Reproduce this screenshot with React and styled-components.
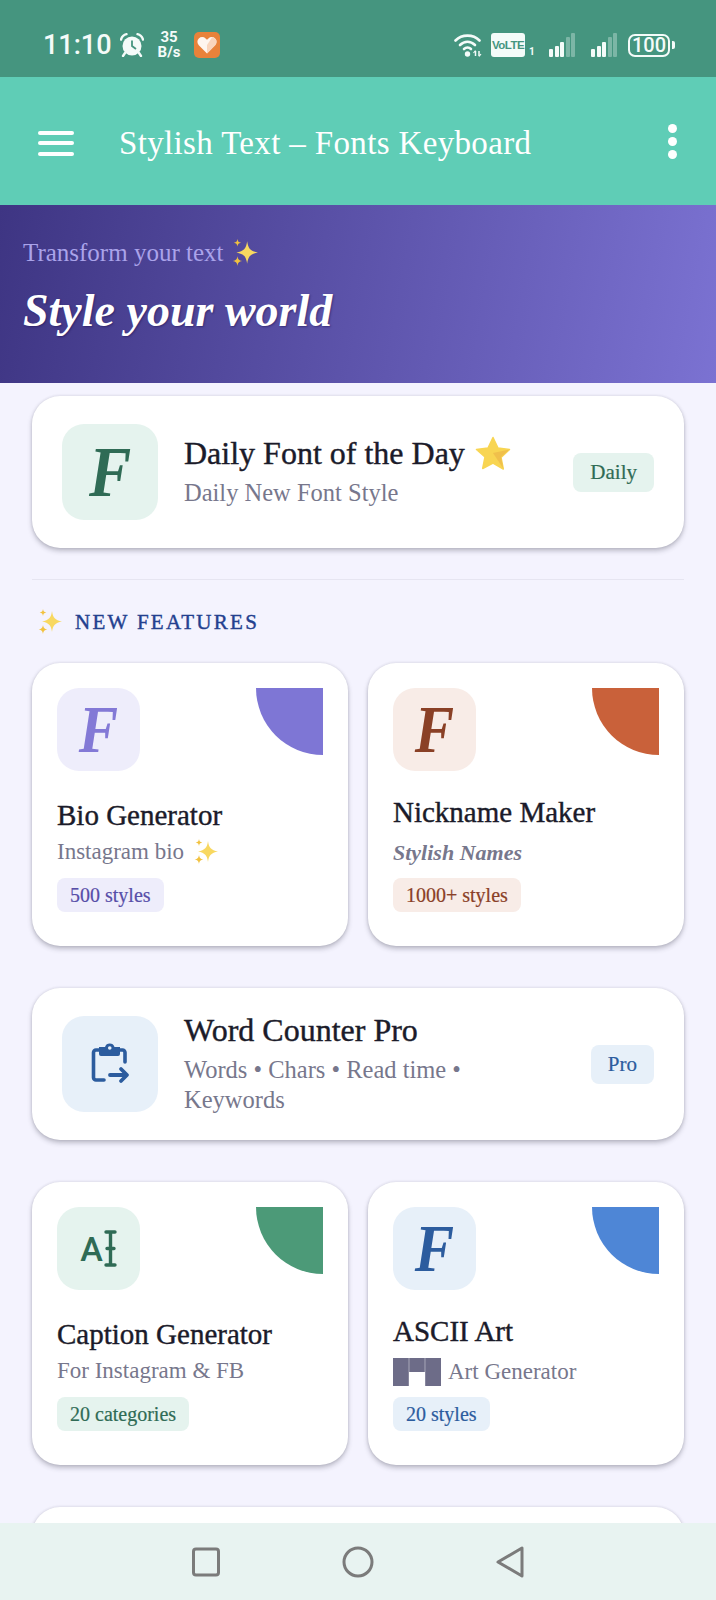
import React from "react";
import styled, { createGlobalStyle } from "styled-components";

const serif = `"Liberation Serif", serif`;
const sans = `Roboto, "Liberation Sans", sans-serif`;

const tones = {
	green: { soft: "#e5f3ee", ink: "#2f6b55", solid: "#4c9a78" },
	violet: { soft: "#eeedfb", ink: "#574ea8", solid: "#7e76d5", glyph: "#8379d6" },
	rust: { soft: "#f8ece7", ink: "#8a4026", solid: "#c9613a" },
	blue: { soft: "#e7f0f9", ink: "#2c5c9e", solid: "#4e86d6" },
};

const GlobalStyle = createGlobalStyle`
	html, body {
		margin: 0;
		padding: 0;
		background: #f4f3fe;
	}
	* {
		box-sizing: border-box;
	}
`;

const Screen = styled.div`
	width: 716px;
	height: 1600px;
	display: flex;
	flex-direction: column;
	overflow: hidden;
	background: #f4f3fe;
	font-family: ${serif};
`;

const StatusBar = styled.div`
	height: 77px;
	flex: none;
	display: flex;
	align-items: center;
	padding: 13px 41px 0 43px;
	background: #45957f;
	color: #f4fbf9;
	font-family: ${sans};
`;

const Time = styled.span`
	font-size: 27px;
	font-weight: 500;
	line-height: 1;
	width: 77px;
`;

const NetSpeed = styled.div`
	width: 26px;
	margin: 0 12px;
	font-size: 15px;
	font-weight: 700;
	line-height: 15px;
	text-align: center;
`;

const StatusRight = styled.div`
	margin-left: auto;
	display: flex;
	align-items: center;
`;

const VolteBadge = styled.span`
	width: 34px;
	height: 24px;
	margin-left: 8px;
	border-radius: 3px;
	background: #f4fbf9;
	color: #45957f;
	font-family: "Liberation Sans", sans-serif;
	font-size: 11.5px;
	font-weight: 700;
	line-height: 24px;
	text-align: center;
	letter-spacing: -0.5px;
`;

const SimIndex = styled.span`
	align-self: flex-end;
	width: 20px;
	margin-left: 4px;
	font-size: 10px;
	font-weight: 700;
	line-height: 10px;
`;

const SignalBars = styled.div`
	width: 26px;
	height: 24px;
	margin-right: 16px;
	display: flex;
	align-items: flex-end;
	gap: 1.5px;
`;

const SignalBar = styled.span`
	width: 4px;
	height: ${(p) => p.$h}px;
	border-radius: 1px;
	background: ${(p) => (p.$on ? "#f4fbf9" : "rgba(244, 251, 249, 0.32)")};
`;

const Battery = styled.div`
	width: 42px;
	height: 23px;
	margin-left: -5px;
	border: 2px solid #f4fbf9;
	border-radius: 7px;
	font-size: 20px;
	font-weight: 500;
	line-height: 19px;
	text-align: center;
`;

const BatteryNub = styled.span`
	width: 3px;
	height: 8px;
	margin-left: 2px;
	border-radius: 0 2px 2px 0;
	background: #f4fbf9;
`;

const AppBar = styled.header`
	height: 128px;
	flex: none;
	display: flex;
	align-items: center;
	padding: 0 0 0 38px;
	background: #5fcdb6;
	color: #fff;
`;

const Burger = styled.div`
	width: 36px;
	margin-top: 4px;
	display: flex;
	flex-direction: column;
	gap: 6.5px;
	span {
		height: 4px;
		border-radius: 2px;
		background: #fff;
	}
`;

const AppTitle = styled.h1`
	margin: 4px 0 0 45px;
	font-size: 33px;
	font-weight: 400;
	letter-spacing: 0.35px;
	white-space: nowrap;
`;

const Kebab = styled.div`
	margin-left: auto;
	margin-right: 39px;
	display: flex;
	flex-direction: column;
	gap: 4px;
	span {
		width: 9px;
		height: 9px;
		border-radius: 50%;
		background: #fff;
	}
`;

const Banner = styled.section`
	height: 178px;
	flex: none;
	padding: 33px 0 0 23px;
	background: linear-gradient(100deg, #3e3583 0%, #7b72d2 100%);
`;

const BannerLine = styled.div`
	display: flex;
	align-items: center;
	gap: 8px;
	font-size: 25px;
	line-height: 30px;
	color: #aaa3ea;
`;

const BannerHeadline = styled.div`
	margin-top: 17px;
	font-size: 46px;
	font-weight: 700;
	font-style: italic;
	line-height: 52px;
	color: #fff;
	text-shadow: 1px 1px 2px rgba(20, 10, 70, 0.45);
`;

const Feed = styled.main`
	flex: 1;
	min-height: 0;
	overflow: hidden;
	padding: 13px 32px 0;
`;

const cardChrome = `
	background: #fff;
	box-shadow: 0 3px 5px rgba(50, 50, 70, 0.28), 0 0 3px rgba(50, 50, 70, 0.15);
`;

const WideCard = styled.article`
	${cardChrome}
	min-height: 152px;
	display: flex;
	align-items: center;
	padding: 0 30px;
	border-radius: 28px;
`;

const Tile = styled.div`
	flex: none;
	width: ${(p) => (p.$wide ? 96 : 83)}px;
	height: ${(p) => (p.$wide ? 96 : 83)}px;
	display: flex;
	align-items: center;
	justify-content: center;
	border-radius: 22px;
	background: ${(p) => tones[p.$tone].soft};
`;

const FontGlyph = styled.span`
	display: inline-block;
	font-size: ${(p) => (p.$wide ? 72 : 67)}px;
	font-weight: 700;
	font-style: italic;
	line-height: 1;
	transform: scaleX(0.88);
	color: ${(p) => tones[p.$tone].glyph || tones[p.$tone].ink};
`;

const CursorGlyph = styled.span`
	font-family: ${sans};
	font-size: 34px;
	font-weight: 500;
	line-height: 1;
	color: ${tones.green.ink};
`;

const WideBody = styled.div`
	flex: 1;
	min-width: 0;
	margin: -2px 0 0 26px;
`;

const Title = styled.h3`
	margin: 0;
	display: flex;
	align-items: center;
	gap: 10px;
	font-size: ${(p) => (p.$wide ? 32 : 29)}px;
	font-weight: 400;
	line-height: 36px;
	color: #1b1b2a;
	-webkit-text-stroke: 0.4px #1b1b2a;
	white-space: nowrap;
`;

const Sub = styled.p`
	margin: 7px 0 0;
	font-size: 24.500px;
	line-height: 30px;
	color: #77778c;
`;

const WrappedSub = styled(Sub)`
	width: 310px;
`;

const SmallSub = styled.p`
	min-height: ${(p) => (p.$tall ? 36 : 30)}px;
	margin: ${(p) => (p.$tall ? "5px 0 7px" : "4px 0 11px")};
	display: flex;
	align-items: center;
	gap: ${(p) => (p.$tall ? 7 : 9)}px;
	font-size: 23px;
	line-height: 30px;
	color: #77778c;
`;

const ScriptSub = styled.span`
	font-style: italic;
	font-weight: 700;
	font-size: 22px;
`;

const Pill = styled.span`
	flex: none;
	display: inline-block;
	height: ${(p) => (p.$large ? 39 : 34)}px;
	padding: 0 ${(p) => (p.$large ? 17 : 13)}px;
	border-radius: 8px;
	background: ${(p) => tones[p.$tone].soft};
	color: ${(p) => tones[p.$tone].ink};
	font-size: ${(p) => (p.$large ? 21 : 20)}px;
	line-height: ${(p) => (p.$large ? 39 : 34)}px;
	-webkit-text-stroke: 0.2px ${(p) => tones[p.$tone].ink};
`;

const Divider = styled.hr`
	height: 1px;
	margin: 31px 0 0;
	border: 0;
	background: #e6e5f1;
`;

const SectionLabel = styled.h2`
	margin: 29px 0 28px 5px;
	display: flex;
	align-items: center;
	gap: 12px;
	font-size: 21px;
	font-weight: 400;
	line-height: 24px;
	letter-spacing: 2.3px;
	color: #23408f;
	-webkit-text-stroke: 0.4px #23408f;
`;

const CardGrid = styled.div`
	display: grid;
	grid-template-columns: 1fr 1fr;
	gap: 20px;
	margin: ${(p) => p.$before}px 0 ${(p) => p.$after}px;
`;

const SmallCard = styled.article`
	${cardChrome}
	height: 283px;
	display: flex;
	flex-direction: column;
	padding: 25px 25px 34px;
	border-radius: 28px;
`;

const SmallTop = styled.div`
	display: flex;
	align-items: flex-start;
	justify-content: space-between;
`;

const Corner = styled.span`
	width: 67px;
	height: 67px;
	border-bottom-left-radius: 100%;
	background: ${(p) => tones[p.$tone].solid};
`;

const SmallBody = styled.div`
	margin-top: auto;
`;

const NavBar = styled.nav`
	height: 77px;
	flex: none;
	display: flex;
	align-items: center;
	justify-content: center;
	gap: 121px;
	background: #e8f3f1;
`;

const Sparkles = ({ size = 28 }) => (
	<svg width={size} height={size} viewBox="0 0 26 26" style={{ flex: "none" }}>
		<path d="M15 2c1 7 3 9 10 10.500c-7 1.500-9 3.500-10 10.500c-1-7-3-9-10-10.500c7-1.500 9-3.500 10-10.500z" fill="#f8d860" />
		<path d="M6 0c.4 2.400 1 3 3.300 3.500c-2.300.5-2.900 1.100-3.300 3.500c-.4-2.400-1-3-3.300-3.500c2.300-.5 2.900-1.100 3.300-3.500z" fill="#f2c23f" />
		<path d="M6 16c.5 3 1.300 3.800 4.300 4.400c-3 .6-3.800 1.400-4.300 4.600c-.5-3.200-1.300-4-4.300-4.600c3-.6 3.800-1.400 4.300-4.400z" fill="#f2c23f" />
	</svg>
);

const Star = () => (
	<svg width="36" height="34" viewBox="0 0 36 34">
		<path d="M18 1.500l5 10.500 11.500 1.500-8.500 8 2.300 11.500L18 27l-10.300 5.500L10 21 1.500 13.500 13 12z" fill="#f8d552" stroke="#f8d552" strokeWidth="1.500" strokeLinejoin="round" />
		<path d="M18 17l16.500-3.500-8.500 7.500 2.300 11.500z" fill="#eeb84a" opacity="0.75" />
	</svg>
);

const AlarmIcon = () => (
	<svg width="24" height="24" viewBox="0 0 24 24">
		<circle cx="12" cy="13" r="9.500" fill="#f4fbf9" />
		<path d="M12 7.500V13l4 3" fill="none" stroke="#45957f" strokeWidth="1.800" />
		<path d="M1 6.500C2 3.500 4 1.800 6.500 1.200M23 6.500C22 3.500 20 1.800 17.500 1.200M5 20l-2 3M19 20l2 3" fill="none" stroke="#f4fbf9" strokeWidth="2.400" strokeLinecap="round" />
	</svg>
);

const HealthIcon = () => (
	<svg width="26" height="26" viewBox="0 0 26 26">
		<rect width="26" height="26" rx="5" fill="#e8823a" />
		<path d="M13 21.500L4.800 13.200a4.800 4.800 0 0 1 6.800-6.800L13 7.800l1.400-1.400a4.800 4.800 0 0 1 6.800 6.800z" fill="#fff" opacity="0.92" />
		<path d="M13 21.500l8.200-8.300a4.800 4.800 0 0 0-3-8L13 13z" fill="#f7cdb0" opacity="0.8" />
	</svg>
);

const WifiIcon = () => (
	<svg width="29" height="24" viewBox="0 0 29 24">
		<g fill="none" stroke="#f4fbf9" strokeWidth="2.600" strokeLinecap="round">
			<path d="M1.500 7.500C8 1 19 1 25.500 7.500" />
			<path d="M6 12c4.500-4.300 10.500-4.300 15 0" />
			<path d="M10 16c2-1.800 5-1.800 7 0" />
		</g>
		<circle cx="13.500" cy="21" r="2.700" fill="#f4fbf9" />
		<path d="M21.500 18v5M25 23v-5" stroke="#f4fbf9" strokeWidth="1.500" />
		<path d="M19.500 20l2-2.500M27 21l-2 2.500" stroke="#f4fbf9" strokeWidth="1.200" />
	</svg>
);

const ClipboardGoIcon = () => (
	<svg width="40" height="42" viewBox="0 0 40 42" fill="none">
		<path d="M14 37H6a2.500 2.500 0 0 1-2.500-2.500V9.500A2.500 2.500 0 0 1 6 7h3M30 7h2.500A2.500 2.500 0 0 1 35 9.500V19" stroke="#2c5c9e" strokeWidth="3.600" strokeLinecap="round" />
		<path d="M9 4h6a5 5 0 0 1 9.500 0h5.500v7a2 2 0 0 1-2 2H11a2 2 0 0 1-2-2z" fill="#2c5c9e" />
		<circle cx="19.750" cy="5" r="1.800" fill="#e7f0f9" />
		<path d="M20 32h16M31 26l6 6-6 6" stroke="#2c5c9e" strokeWidth="3.800" strokeLinecap="round" strokeLinejoin="round" />
	</svg>
);

const TextCursorIcon = () => (
	<svg width="13" height="37" viewBox="0 0 13 37" fill="none" style={{ marginLeft: 1 }}>
		<path d="M2 2h9M2 35h9M6.500 2v33M3 18.500h7" stroke="#2f6b55" strokeWidth="3.400" strokeLinecap="round" />
	</svg>
);

const BlockArt = () => (
	<svg width="48" height="28" viewBox="0 0 48 28" style={{ flex: "none" }}>
		<path d="M0 0h15.800v28H0zM16.200 0h15.600v14H16.200zM32.200 0H48v28H32.200z" fill="#6d6c88" />
	</svg>
);

const SquareKey = () => (
	<svg width="30" height="30" viewBox="0 0 30 30" fill="none">
		<rect x="2.500" y="2" width="25" height="26" rx="2.500" stroke="#7b7b7b" strokeWidth="3" />
	</svg>
);

const CircleKey = () => (
	<svg width="32" height="32" viewBox="0 0 32 32" fill="none">
		<circle cx="16" cy="16" r="14" stroke="#7b7b7b" strokeWidth="3" />
	</svg>
);

const BackKey = () => (
	<svg width="30" height="34" viewBox="0 0 30 34" fill="none">
		<path d="M27 3v28L3 17z" stroke="#7b7b7b" strokeWidth="3" strokeLinejoin="round" />
	</svg>
);

const Signal = () => (
	<SignalBars>
		<SignalBar $h={8} $on />
		<SignalBar $h={11} $on />
		<SignalBar $h={15} $on />
		<SignalBar $h={20} />
		<SignalBar $h={24} />
	</SignalBars>
);

const FeatureCard = ({ tone, glyph, title, sub, pill, tall }) => (
	<SmallCard>
		<SmallTop>
			<Tile $tone={tone}>{glyph || <FontGlyph $tone={tone}>F</FontGlyph>}</Tile>
			<Corner $tone={tone} />
		</SmallTop>
		<SmallBody>
			<Title>{title}</Title>
			<SmallSub $tall={tall}>{sub}</SmallSub>
			<Pill $tone={tone}>{pill}</Pill>
		</SmallBody>
	</SmallCard>
);

export default function App() {
	return (
		<Screen>
			<GlobalStyle />
			<StatusBar>
				<Time>11:10</Time>
				<AlarmIcon />
				<NetSpeed>
					35
					<br />
					B/s
				</NetSpeed>
				<HealthIcon />
				<StatusRight>
					<WifiIcon />
					<VolteBadge>VoLTE</VolteBadge>
					<SimIndex>1</SimIndex>
					<Signal />
					<Signal />
					<Battery>100</Battery>
					<BatteryNub />
				</StatusRight>
			</StatusBar>
			<AppBar>
				<Burger>
					<span />
					<span />
					<span />
				</Burger>
				<AppTitle>Stylish Text – Fonts Keyboard</AppTitle>
				<Kebab>
					<span />
					<span />
					<span />
				</Kebab>
			</AppBar>
			<Banner>
				<BannerLine>
					Transform your text <Sparkles />
				</BannerLine>
				<BannerHeadline>Style your world</BannerHeadline>
			</Banner>
			<Feed>
				<WideCard>
					<Tile $wide $tone="green">
						<FontGlyph $wide $tone="green">F</FontGlyph>
					</Tile>
					<WideBody>
						<Title $wide>
							Daily Font of the Day <Star />
						</Title>
						<Sub>Daily New Font Style</Sub>
					</WideBody>
					<Pill $large $tone="green">Daily</Pill>
				</WideCard>
				<Divider />
				<SectionLabel>
					<Sparkles size={26} />
					NEW FEATURES
				</SectionLabel>
				<CardGrid $before={0} $after={42}>
					<FeatureCard
						tone="violet"
						title="Bio Generator"
						sub={<>Instagram bio <Sparkles size={26} /></>}
						pill="500 styles"
					/>
					<FeatureCard
						tone="rust"
						title="Nickname Maker"
						tall
						sub={<ScriptSub>Stylish Names</ScriptSub>}
						pill="1000+ styles"
					/>
				</CardGrid>
				<WideCard>
					<Tile $wide $tone="blue">
						<ClipboardGoIcon />
					</Tile>
					<WideBody>
						<Title $wide>Word Counter Pro</Title>
						<WrappedSub>Words • Chars • Read time • Keywords</WrappedSub>
					</WideBody>
					<Pill $large $tone="blue">Pro</Pill>
				</WideCard>
				<CardGrid $before={42} $after={42}>
					<FeatureCard
						tone="green"
						glyph={
							<>
								<CursorGlyph>A</CursorGlyph>
								<TextCursorIcon />
							</>
						}
						title="Caption Generator"
						sub="For Instagram & FB"
						pill="20 categories"
					/>
					<FeatureCard
						tone="blue"
						title="ASCII Art"
						tall
						sub={<><BlockArt /> Art Generator</>}
						pill="20 styles"
					/>
				</CardGrid>
				<WideCard />
			</Feed>
			<NavBar>
				<SquareKey />
				<CircleKey />
				<BackKey />
			</NavBar>
		</Screen>
	);
}
